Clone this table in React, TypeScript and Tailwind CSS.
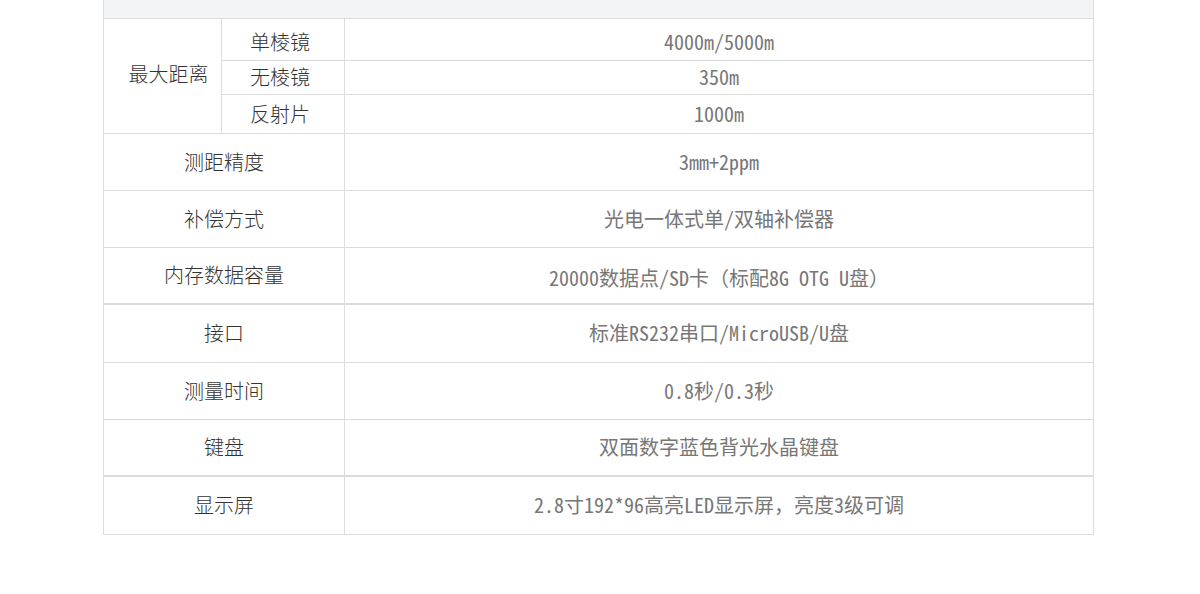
import React from "react";

const rows: { label: string; value: string; thick?: boolean; vpad?: string }[] = [
  { label: "测距精度", value: "3mm+2ppm" },
  { label: "补偿方式", value: "光电一体式单/双轴补偿器" },
  { label: "内存数据容量", value: "20000数据点/SD卡（标配8G OTG U盘）", vpad: "pt-[6px]" },
  { label: "接口", value: "标准RS232串口/MicroUSB/U盘", thick: true },
  { label: "测量时间", value: "0.8秒/0.3秒" },
  { label: "键盘", value: "双面数字蓝色背光水晶键盘" },
  { label: "显示屏", value: "2.8寸192*96高亮LED显示屏，亮度3级可调", thick: true },
];

const sub = [
  { label: "单棱镜", value: "4000m/5000m", h: "h-[42px]", pad: "pt-[5px]" },
  { label: "无棱镜", value: "350m", h: "h-[34px]", pad: "" },
  { label: "反射片", value: "1000m", h: "h-[39px]", pad: "" },
];

const labelFont = "font-['Noto_Sans_CJK_SC','Noto_Sans',sans-serif] font-light";
const valueFont = "font-['Noto_Sans_Mono_CJK_SC','Noto_Sans_CJK_SC','DejaVu_Sans_Mono',monospace]";

export default function App() {
  return (
    <div className="w-[1200px] h-[594px] bg-white">
      <table className="ml-[103px] w-[991px] border-collapse table-fixed text-[20px]">
        <colgroup>
          <col className="w-[118px]" />
          <col className="w-[123px]" />
          <col />
        </colgroup>
        <tbody>
          <tr className="h-[18px]">
            <td colSpan={3} className="bg-[#f3f4f5] border border-t-0 border-[#dcdcdc]" />
          </tr>
          {sub.map((s, i) => (
            <tr key={s.label} className={s.h}>
              {i === 0 && (
                <td rowSpan={3} className={`border border-[#dcdcdc] text-center text-[#333] pl-[12px] pb-[4px] ${labelFont}`}>
                  最大距离
                </td>
              )}
              <td className={`border border-[#dcdcdc] text-center text-[#333] pr-[6px] ${s.pad} ${labelFont}`}>{s.label}</td>
              <td className={`border border-[#dcdcdc] text-center text-[#777] ${s.pad} ${valueFont}`}>{s.value}</td>
            </tr>
          ))}
          {rows.map((r) => (
            <tr key={r.label} className={r.thick ? "h-[58px]" : "h-[57px]"}>
              <td
                colSpan={2}
                className={`border border-[#dcdcdc] text-center text-[#333] ${r.thick ? "border-t-2" : ""} ${labelFont}`}
              >
                {r.label}
              </td>
              <td
                className={`border border-[#dcdcdc] text-center text-[#777] ${r.vpad ?? ""} ${r.thick ? "border-t-2" : ""} ${valueFont}`}
              >
                {r.value}
              </td>
            </tr>
          ))}
        </tbody>
      </table>
    </div>
  );
}
